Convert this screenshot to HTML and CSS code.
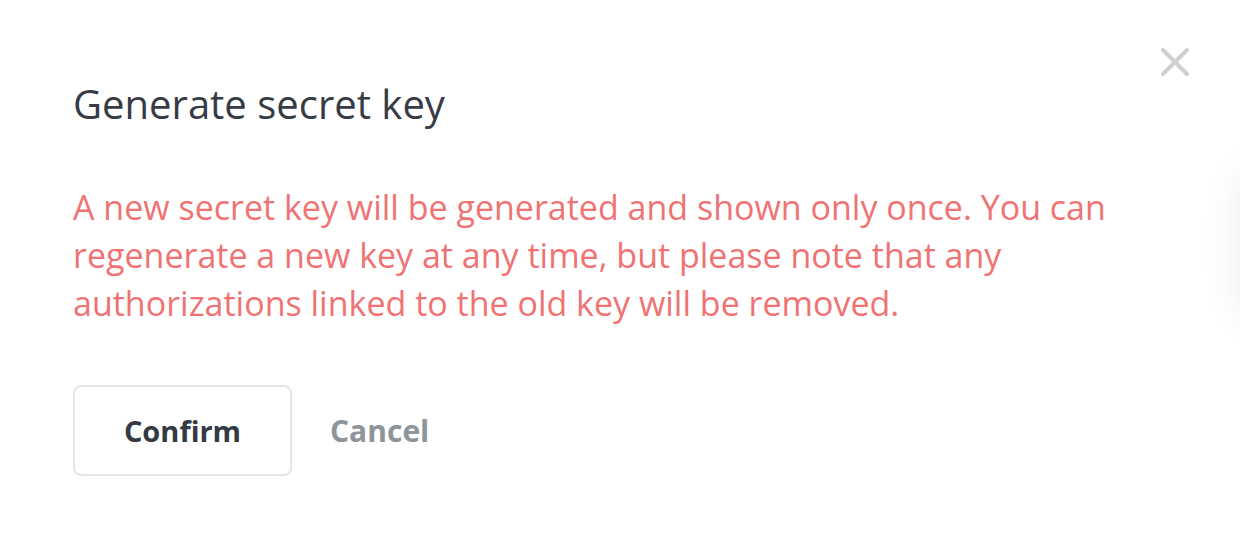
FILE: index.html
```html
<!DOCTYPE html>
<html lang="en">
<head>
  <meta charset="UTF-8">
  <title>Generate secret key</title>
  <link rel="stylesheet" href="styles.css">
</head>
<body>

  <div class="modal">
    <button class="close" aria-label="Close">
      <svg width="30" height="30" viewBox="0 0 30 30">
        <path d="M3 3 L27 27 M27 3 L3 27" stroke="#cfcfcf" stroke-width="4" stroke-linecap="round"/>
      </svg>
    </button>

    <h1>Generate secret key</h1>

    <p class="warning">
      A new secret key will be generated and shown only once. You can
      regenerate a new key at any time, but please note that any
      authorizations linked to the old key will be removed.
    </p>

    <div class="actions">
      <button class="confirm">Confirm</button>
      <button class="cancel">Cancel</button>
    </div>
  </div>

  <div class="edge-shadow"></div>

</body>
</html>
```

FILE: styles.css
```css
html, body {
  margin: 0;
  height: 100%;
  overflow: hidden;
}
body {
  font-family: "Open Sans", "Noto Sans", sans-serif;
  background-color: #ffffff;
  position: relative;
}
.modal {
  padding: 70px 73px 0 73px;
}
h1 {
  margin: 0;
  font-size: 40px;
  font-weight: 400;
  line-height: 68px;
  color: #363b45;
}
.close {
  position: absolute;
  top: 47px;
  right: 50px;
  padding: 0;
  border: none;
  background: none;
  cursor: pointer;
}
.warning {
  margin: 45px 0 0 0;
  width: 1075px;
  font-size: 34px;
  line-height: 48px;
  color: #f07373;
}
.actions {
  display: flex;
  align-items: center;
  gap: 38px;
  margin-top: 58px;
}
button {
  font-family: inherit;
}
.confirm {
  width: 219px;
  height: 91px;
  border: 2px solid #e6e6e6;
  border-radius: 8px;
  background: #ffffff;
  font-size: 29px;
  font-weight: 700;
  color: #333a44;
  cursor: pointer;
}
.cancel {
  padding: 0;
  border: none;
  background: none;
  font-size: 30px;
  font-weight: 700;
  color: #8f9499;
  cursor: pointer;
}
.edge-shadow {
  position: absolute;
  right: -60px;
  top: 170px;
  width: 60px;
  height: 150px;
  border-radius: 30px;
  box-shadow: 0 0 40px rgba(0, 0, 0, 0.08);
}
```
